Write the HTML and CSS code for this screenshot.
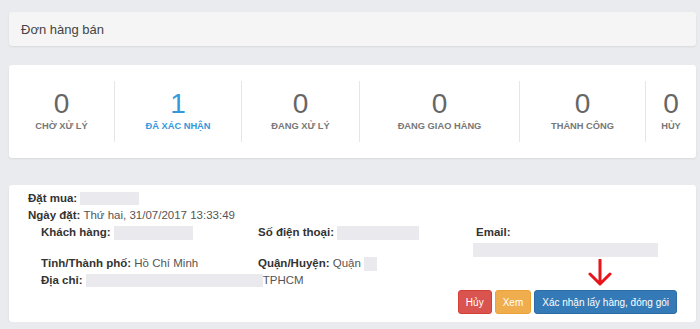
FILE: index.html
```html
<!DOCTYPE html>
<html lang="vi">
<head>
<meta charset="utf-8">
<title>Đơn hàng bán</title>
<link rel="stylesheet" href="styles.css">
</head>
<body>
<div class="page">
  <div class="panel title-panel">Đơn hàng bán</div>

  <div class="panel stats">
    <div class="stat"><div class="num">0</div><div class="lbl">CHỜ XỬ LÝ</div></div>
    <div class="stat active"><div class="num">1</div><div class="lbl">ĐÃ XÁC NHẬN</div></div>
    <div class="stat"><div class="num">0</div><div class="lbl">ĐANG XỬ LÝ</div></div>
    <div class="stat"><div class="num">0</div><div class="lbl">ĐANG GIAO HÀNG</div></div>
    <div class="stat"><div class="num">0</div><div class="lbl">THÀNH CÔNG</div></div>
    <div class="stat"><div class="num">0</div><div class="lbl">HỦY</div></div>
  </div>

  <div class="panel order">
    <div class="line"><b>Đặt mua:</b> <span class="blank w-buy"></span></div>
    <div class="line"><b>Ngày đặt:</b> Thứ hai, 31/07/2017 13:33:49</div>
    <div class="info">
      <div class="line c1"><b>Khách hàng:</b> <span class="blank w-cust"></span></div>
      <div class="line c2"><b>Số điện thoại:</b> <span class="blank w-phone"></span></div>
      <div class="email">
        <div class="line email-lbl"><b>Email:</b></div>
        <span class="blank w-email"></span>
      </div>
      <div class="line c1 r2"><b>Tỉnh/Thành phố:</b> Hồ Chí Minh</div>
      <div class="line c2 r2"><b>Quận/Huyện:</b> Quận <span class="blank w-dist"></span></div>
      <div class="line c1 r3"><b>Địa chỉ:</b> <span class="blank w-addr"></span>TPHCM</div>
    </div>
    <div class="actions">
      <svg class="arrow" width="24" height="28" viewBox="0 0 24 28" aria-hidden="true">
        <path d="M12 1 V25 M2 15 L12 25 L22 15" fill="none" stroke="#e8141c" stroke-width="3" stroke-linecap="round" stroke-linejoin="round"/>
      </svg>
      <button class="btn btn-red">Hủy</button>
      <button class="btn btn-orange">Xem</button>
      <button class="btn btn-blue">Xác nhận lấy hàng, đóng gói</button>
    </div>
  </div>
</div>
</body>
</html>
```

FILE: styles.css
```css
html, body {
  margin: 0;
  padding: 0;
  background: #e9ebee;
  font-family: "Liberation Sans", Arial, sans-serif;
  color: #333;
}
.page {
  padding: 12px 4px 0 9px;
  display: flex;
  flex-direction: column;
}
.panel {
  border-radius: 3px;
  box-shadow: 0 1px 2px rgba(0,0,0,0.08);
}
.title-panel {
  background: #f5f5f5;
  height: 34px;
  box-sizing: border-box;
  padding: 0 12px;
  display: flex;
  align-items: center;
  font-size: 13px;
  color: #444;
}
.stats {
  margin-top: 19px;
  background: #fff;
  height: 93px;
  box-sizing: border-box;
  padding: 16px 0;
  display: grid;
  grid-template-columns: 105px 127px 118px 160px 126px 1fr;
}
.stat {
  border-left: 1px solid #e6e6e6;
  display: flex;
  flex-direction: column;
  align-items: center;
  justify-content: center;
  color: #666;
}
.stat:first-child { border-left: none; }
.num {
  font-size: 28px;
  line-height: 28px;
  font-weight: normal;
  margin-top: -2px;
}
.lbl {
  font-size: 9.3px;
  font-weight: bold;
  margin-top: 3px;
  color: #777;
}
.stat.active .num, .stat.active .lbl { color: #3498db; }

.order {
  margin-top: 27px;
  background: #fff;
  height: 137px;
  box-sizing: border-box;
  padding: 5px 19px 0 19px;
  font-size: 11.5px;
  color: #555;
}
.line {
  height: 17px;
  line-height: 17px;
  white-space: nowrap;
}
.line b { color: #333; }
.blank {
  display: inline-block;
  background: #e9e9ee;
  vertical-align: middle;
  height: 14px;
}
.w-buy { width: 59px; height: 13px; }
.w-cust { width: 79px; }
.w-phone { width: 82px; }
.w-dist { width: 13px; }
.w-addr { width: 177px; height: 13px; }
.w-email { width: 185px; display: block; margin-top: 2px; }

.info {
  display: grid;
  grid-template-columns: 217px 215px 1fr;
  grid-template-rows: 31px 17px 17px;
  padding-left: 13px;
}
.c1 { grid-column: 1; }
.c2 { grid-column: 2; }
.r2 { grid-row: 2; }
.r3 { grid-row: 3; }
.email { grid-column: 3; grid-row: 1 / span 2; }
.email-lbl { padding-left: 3px; }

.actions {
  position: relative;
  display: flex;
  justify-content: flex-end;
  gap: 3px;
  margin-top: 1px;
}
.arrow {
  position: absolute;
  right: 65px;
  top: -31px;
}
.btn {
  height: 24px;
  border: 1px solid transparent;
  border-radius: 3px;
  padding: 0 7px;
  font-family: "Liberation Sans", Arial, sans-serif;
  font-size: 10px;
  color: #fff;
  cursor: pointer;
}
.btn-red { background: #d9534f; border-color: #d43f3a; }
.btn-orange { background: #f0ad4e; border-color: #eea236; }
.btn-blue { background: #337ab7; border-color: #2e6da4; }
```
